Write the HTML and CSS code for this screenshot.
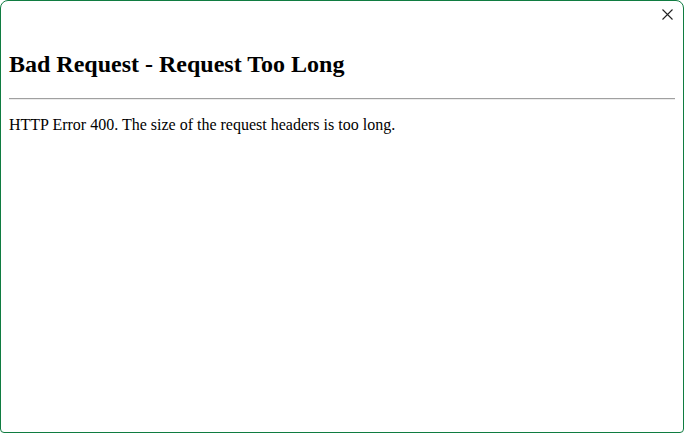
FILE: index.html
```html
<!DOCTYPE html>
<html>
<head>
<meta charset="utf-8">
<link rel="stylesheet" href="styles.css">
</head>
<body>
<div class="dialog">
  <div class="titlebar">
    <button class="close" aria-label="Close">
      <svg width="11" height="11" viewBox="0 0 11 11"><path d="M0.5 0.5 L10.5 10.5 M10.5 0.5 L0.5 10.5" stroke="#222" stroke-width="1.1" fill="none"/></svg>
    </button>
  </div>
  <div class="content">
    <h2 class="title">Bad Request - Request Too Long</h2>
    <hr class="rule">
    <p class="msg">HTTP Error 400. The size of the request headers is too long.</p>
  </div>
</div>
</body>
</html>
```

FILE: styles.css
```css
html, body {
  margin: 0;
  padding: 0;
  background: #fff;
}
.dialog {
  box-sizing: border-box;
  width: 684px;
  height: 433px;
  border: 1px solid #107c41;
  border-radius: 8px 8px 4px 4px;
  background: #fff;
  font-family: "Liberation Serif", "Times New Roman", serif;
  color: #000;
  display: flex;
  flex-direction: column;
}
.titlebar {
  height: 30px;
  display: flex;
  justify-content: flex-end;
  align-items: flex-start;
  flex: none;
}
.close {
  border: 0;
  background: transparent;
  padding: 0;
  margin: 8px 10px 0 0;
  width: 11px;
  height: 11px;
  display: flex;
}
.content {
  padding: 0 8px;
  flex: 1;
}
.title {
  font-size: 24px;
  font-weight: bold;
  margin: 20px 0;
}
.rule {
  margin: 0 0 8px;
  border: none;
  border-top: 1px solid #a0a0a0;
  border-bottom: 1px solid #ececec;
  height: 0;
}
.msg {
  font-size: 16px;
  margin: 16px 0;
}
```
